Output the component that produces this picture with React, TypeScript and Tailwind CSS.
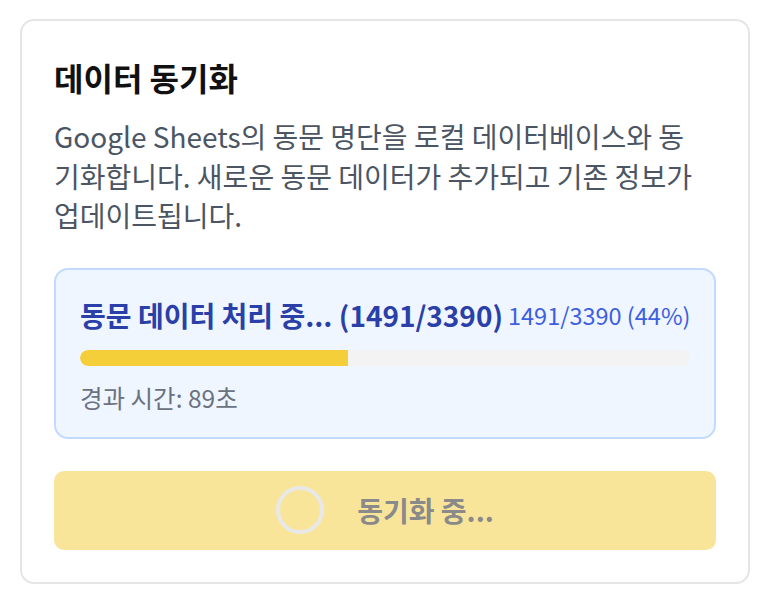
import React from 'react';

const font = { fontFamily: '"Noto Sans CJK KR", "Noto Sans", sans-serif' };

const SyncProgress: React.FC<{ done: number; total: number; elapsed: number }> = ({ done, total, elapsed }) => {
    const pct = Math.round((done / total) * 100);
    return (
        <div className="mt-8 rounded-[14px] border-2 border-[#c3dafe] bg-[#eff6ff] px-6 pt-6 pb-[23px]">
            <div className="flex items-center justify-between gap-[5px]">
                <p className="text-[28px] leading-[42px] font-semibold text-[#2a3fa8] whitespace-nowrap">
                    동문 데이터 처리 중... ({done}/{total})
                </p>
                <span className="text-[23.5px] leading-[42px] text-[#3e5fe0] whitespace-nowrap">
                    {done}/{total} ({pct}%)
                </span>
            </div>
            <div className="mt-[14px] h-4 w-full rounded-full bg-[#f3f3f3] overflow-hidden">
                <div className="h-full rounded-l-full bg-[#f5cf3a]" style={{ width: `${(done / total) * 100}%` }} />
            </div>
            <p className="mt-4 text-[24.5px] leading-[32px] text-[#6b7280]">경과 시간: {elapsed}초</p>
        </div>
    );
};

export default function App() {
    return (
        <div className="min-h-screen bg-white pt-[19px] pl-5 pr-2" style={font}>
            <div className="rounded-[14px] border-2 border-[#e5e5e5] bg-white p-8">
                <h2 className="text-[32px] leading-[48px] font-bold text-[#111111]">데이터 동기화</h2>
                <p className="mt-4 pr-2 text-[28px] leading-[39.5px] text-[#4b5563]">
                    Google Sheets의 동문 명단을 로컬 데이터베이스와 동기화합니다. 새로운 동문 데이터가 추가되고 기존 정보가 업데이트됩니다.
                </p>
                <SyncProgress done={1491} total={3390} elapsed={89} />
                <button
                    disabled
                    className="mt-8 flex h-[79px] w-full items-center justify-center gap-[33px] rounded-[10px] bg-[#f9e59a] text-[28px] font-semibold text-[#8a8a8a]"
                >
                    <span className="h-12 w-12 rounded-full border-4 border-[#e8e8e8]" />
                    <span>동기화 중...</span>
                </button>
            </div>
        </div>
    );
}
